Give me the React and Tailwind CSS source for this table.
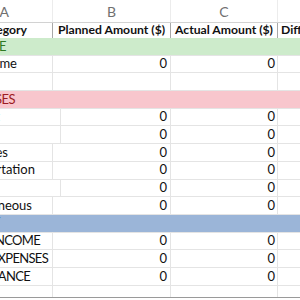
import React from 'react'

/*
 * Budget spreadsheet fragment: column letters, bold header row,
 * coloured section bands (income / expenses / summary) and zero values.
 */

const font = { fontFamily: "Lato, 'Liberation Sans', sans-serif" }

const rows = [
  { label: 'INCOME', kind: 'green', pr: 'pr-[47px]' },
  { label: 'Income', b: 0, c: 0, pr: 'pr-[35px]' },
  { label: '', kind: 'blank' },
  { label: 'EXPENSES', kind: 'pink', pr: 'pr-[38px]' },
  { label: 'Rent', b: 0, c: 0, pr: 'pr-[60px]' },
  { label: 'Food', b: 0, c: 0, pr: 'pr-[60px]' },
  { label: 'Utilities', b: 0, c: 0, pr: 'pr-[44px]' },
  { label: 'Transportation', b: 0, c: 0, pr: 'pr-[17px]' },
  { label: 'Fun', b: 0, c: 0, pr: 'pr-[60px]' },
  { label: 'Miscellaneous', b: 0, c: 0, pr: 'pr-[20px]' },
  { label: 'SUMMARY', kind: 'blue', pr: 'pr-[60px]' },
  { label: 'TOTAL INCOME', b: 0, c: 0, pr: 'pr-[12px] tracking-[-0.7px]' },
  { label: 'TOTAL EXPENSES', b: 0, c: 0, pr: 'pr-[4px] tracking-[-0.7px]' },
  { label: 'NET BALANCE', b: 0, c: 0, pr: 'pr-[22px] tracking-[-0.7px]' },
]

const bands = {
  green: 'bg-[#cdebcb] text-[#2f7a23]',
  pink: 'bg-[#f8c6cd] text-[#9c1c24]',
  blue: 'bg-[#9bb5d8] text-[#1f3b63]',
}

function Cell({ children, className = '' }) {
  return <div className={`flex items-center overflow-hidden whitespace-nowrap ${className}`}>{children}</div>
}

function Row({ row }) {
  const band = bands[row.kind]
  if (band) {
    return (
      <div className={`grid h-[17.7px] grid-cols-[53px_118px_107px_1fr] border-b border-[#e4e4e4] ${band}`}>
        <Cell className={`justify-end tracking-[-0.5px] ${row.pr}`}>{row.label}</Cell>
        <Cell />
        <Cell />
        <Cell />
      </div>
    )
  }
  return (
    <div className="grid h-[17.7px] grid-cols-[53px_118px_107px_1fr] border-b border-[#e4e4e4] text-[#111]">
      <Cell className={`justify-end border-r border-[#e4e4e4] ${row.pr ?? ''}`}>{row.label}</Cell>
      <Cell className="justify-end border-r border-[#e4e4e4] pr-[3px]">{row.b}</Cell>
      <Cell className="justify-end border-r border-[#e4e4e4] pr-[2px]">{row.c}</Cell>
      <Cell />
    </div>
  )
}

export default function App() {
  return (
    <div className="h-[300px] w-[300px] overflow-hidden bg-white text-[13px]" style={font}>
      {/* column letters */}
      <div className="grid h-[23px] grid-cols-[53px_118px_107px_1fr] border-b border-[#d2d2d2] text-[14px] text-[#707070]">
        <Cell className="justify-end border-r border-[#ececec] pr-[43px]">A</Cell>
        <Cell className="justify-center border-r border-[#ececec]">B</Cell>
        <Cell className="justify-center border-r border-[#ececec]">C</Cell>
        <Cell className="pl-[27px]">D</Cell>
      </div>

      {/* header row */}
      <div className="grid h-[15px] grid-cols-[53px_118px_107px_1fr] text-[12.2px] font-bold text-[#111]">
        <Cell className="justify-end border-r border-[#a8a8a8] pr-[25px]">Category</Cell>
        <Cell className="border-r border-[#a8a8a8] pl-[5px]">Planned Amount ($)</Cell>
        <Cell className="border-r border-[#a8a8a8] pl-[4px]">Actual Amount ($)</Cell>
        <Cell className="pl-[3px]">Difference ($)</Cell>
      </div>

      {rows.map((row, i) => (
        <Row key={i} row={row} />
      ))}

      {/* trailing row, cut by the frame */}
      <div className="grid h-[12px] grid-cols-[53px_118px_107px_1fr] border-b border-[#9a9a9a]">
        <Cell className="border-r border-[#e4e4e4]" />
        <Cell className="border-r border-[#e4e4e4]" />
        <Cell className="border-r border-[#e4e4e4]" />
        <Cell />
      </div>
    </div>
  )
}
